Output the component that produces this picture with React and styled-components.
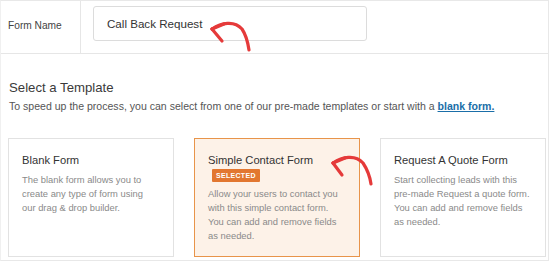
import styled, { createGlobalStyle } from 'styled-components'

const Global = createGlobalStyle`
  body {
    margin: 0;
    background: #fff;
    font-family: "Liberation Sans", Arial, sans-serif;
  }
`

const Page = styled.div`
  position: relative;
  width: 549px;
  height: 261px;
  box-sizing: border-box;
  border: 1px solid #e8e8e8;
  border-left-color: #f0f0f0;
  overflow: hidden;
`

const NameRow = styled.div`
  display: flex;
  height: 52px;
  border-bottom: 1px solid #e6e6e6;
`

const Label = styled.div`
  width: 80px;
  box-sizing: border-box;
  padding-left: 7px;
  display: flex;
  align-items: center;
  font-size: 10.2px;
  color: #444;
  border-right: 1px solid #e6e6e6;
  padding-bottom: 3px;
`

const InputCell = styled.div`
  padding: 5px 0 0 12px;
`

const NameInput = styled.div`
  width: 274px;
  height: 35px;
  box-sizing: border-box;
  border: 1px solid #dcdcdc;
  border-radius: 3px;
  padding-left: 13px;
  display: flex;
  align-items: center;
  font-size: 11.6px;
  color: #333;
`

const Section = styled.div`
  padding: 0 7px;
`

const Heading = styled.h2`
  margin: 26px 0 0 1px;
  font-size: 13.2px;
  font-weight: 400;
  color: #3a3a3a;
  line-height: 16px;
`

const Intro = styled.p`
  margin: 3px 0 0 1px;
  font-size: 10.55px;
  color: #555;
  line-height: 14px;
  white-space: nowrap;

  a {
    color: #1a6ea8;
    font-weight: 700;
    text-decoration: underline;
  }
`

const Cards = styled.div`
  display: grid;
  grid-template-columns: 166px 166px 166px;
  column-gap: 20px;
  margin-top: 25px;
`

const Card = styled.div`
  height: 119px;
  box-sizing: border-box;
  border: 1px solid ${p => (p.$selected ? '#e8944a' : '#e2e2e2')};
  background: ${p => (p.$selected ? '#fdf2e8' : '#fff')};
  padding: 14px 14px 0 13px;
`

const CardTitle = styled.div`
  font-size: 11.2px;
  color: #333;
  line-height: 14px;
`

const Badge = styled.span`
  display: block;
  width: fit-content;
  margin: 2px 0 0 4px;
  padding: 0 4px;
  height: 13px;
  line-height: 13px;
  background: #e27730;
  color: #fff;
  font-size: 7px;
  font-weight: 700;
  letter-spacing: 0.3px;
  border-radius: 1px;
`

const CardText = styled.p`
  margin: ${p => (p.$tight ? '5px' : '6px')} 0 0;
  font-size: 9.4px;
  line-height: 14px;
  color: #8a8a8a;
`

const Arrows = styled.svg`
  position: absolute;
  left: 0;
  top: 0;
  pointer-events: none;
`

const templates = [
  {
    title: 'Blank Form',
    text: 'The blank form allows you to create any type of form using our drag & drop builder.',
  },
  {
    title: 'Simple Contact Form',
    text: 'Allow your users to contact you with this simple contact form. You can add and remove fields as needed.',
    selected: true,
  },
  {
    title: 'Request A Quote Form',
    text: 'Start collecting leads with this pre-made Request a quote form. You can add and remove fields as needed.',
  },
]

function App() {
  return (
    <>
      <Global />
      <Page>
        <NameRow>
          <Label>Form Name</Label>
          <InputCell>
            <NameInput>Call Back Request</NameInput>
          </InputCell>
        </NameRow>
        <Section>
          <Heading>Select a Template</Heading>
          <Intro>
            To speed up the process, you can select from one of our pre-made templates or start with a{' '}
            <a href="#blank">blank form.</a>
          </Intro>
          <Cards>
            {templates.map(t => (
              <Card key={t.title} $selected={t.selected}>
                <CardTitle>{t.title}</CardTitle>
                {t.selected && <Badge>SELECTED</Badge>}
                <CardText $tight={t.selected}>{t.text}</CardText>
              </Card>
            ))}
          </Cards>
        </Section>
        <Arrows width="549" height="261" viewBox="0 0 549 261">
          <g fill="none" stroke="#e53a3a" strokeWidth="3.2" strokeLinecap="round" strokeLinejoin="round">
            <path d="M211 28 C 220 22, 233 19, 241 28 C 245 34, 247 42, 248 49" />
            <path d="M211 28 L 223 23" />
            <path d="M211 28 L 221 40" />
            <path d="M332 162 C 341 156, 354 153, 362 162 C 366 168, 369 176, 370 183" />
            <path d="M332 162 L 344 157" />
            <path d="M332 162 L 341 174" />
          </g>
        </Arrows>
      </Page>
    </>
  )
}

export default App
